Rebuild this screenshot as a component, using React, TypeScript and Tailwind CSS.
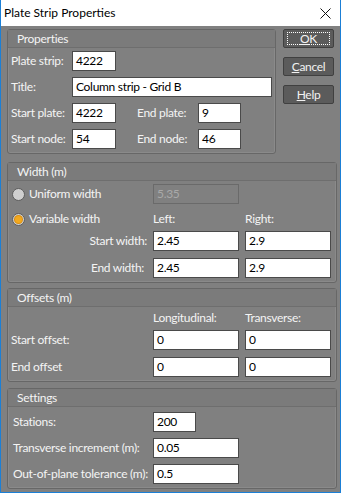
import React from "react";

const font = { fontFamily: 'Lato, "Liberation Sans", sans-serif' };

function Group({ title, className, children }: { title: string; className?: string; children: React.ReactNode }) {
  return (
    <div className={`rounded-[3px] border border-[#676767] shadow-[inset_0_0_0_1px_#8a8a8a] ${className ?? ""}`}>
      <div className="h-[18px] border-b border-[#6e6e6e] bg-[#7b7b7b] pl-[9px] text-[12px] leading-[18px] text-[#f4f4f4]">
        {title}
      </div>
      {children}
    </div>
  );
}

function Box({ value, w, disabled }: { value: string; w: string; disabled?: boolean }) {
  return (
    <div
      className={`h-[20px] shrink-0 ${w} border pl-[3px] text-[12px] leading-[18px] ${
        disabled ? "border-[#6a6a6a] bg-[#808080] text-[#a9a9a9]" : "border-[#4a4a4a] bg-white text-black"
      }`}
    >
      {value}
    </div>
  );
}

function Radio({ checked }: { checked?: boolean }) {
  return (
    <div className="flex h-[13px] w-[13px] shrink-0 items-center justify-center rounded-full border border-[#5c5c5c] bg-[#cfcfcf]">
      {checked && <div className="h-[7px] w-[7px] rounded-full bg-[#f2a91e] shadow-[0_0_0_1px_#d98d10]" />}
    </div>
  );
}

function Btn({ children, focus }: { children: React.ReactNode; focus?: boolean }) {
  return (
    <div className="flex h-[19px] w-[51px] items-center justify-center rounded-[2px] border border-[#404040] bg-[#5b5b5b] text-[12px] text-[#f2f2f2]">
      <div className={`flex h-[13px] w-[43px] items-center justify-center ${focus ? "border border-dotted border-white" : ""}`}>
        {children}
      </div>
    </div>
  );
}

const lbl = "shrink-0 whitespace-nowrap text-[12px] text-[#f4f4f4] leading-[20px]";

export default function App() {
  return (
    <div
      className="flex h-[493px] w-[341px] flex-col overflow-hidden border-x border-b border-[#1b7fd6] bg-white tracking-[-0.3px]"
      style={font}
    >
      {/* Title bar */}
      <div className="flex h-[26px] shrink-0 items-center justify-between pl-[3px] pr-[9px]">
        <span className="text-[12px] tracking-normal text-black">Plate Strip Properties</span>
        <svg width="11" height="11" viewBox="0 0 11 11">
          <path d="M0.5 0.5 L10.5 10.5 M10.5 0.5 L0.5 10.5" stroke="#111" strokeWidth="1" />
        </svg>
      </div>

      <div className="flex flex-1 flex-col bg-[#808080] pl-[6px] pr-[4px] pt-[3px]">
        {/* Top row */}
        <div className="flex">
          <Group title="Properties" className="h-[125px] w-[269px]">
            <div className="flex flex-col gap-[6px] pl-[3px] pt-[3px]">
              <div className="flex">
                <span className={`${lbl} w-[61px]`}>Plate strip:</span>
                <Box value="4222" w="w-[44px]" />
              </div>
              <div className="flex">
                <span className={`${lbl} w-[61px]`}>Title:</span>
                <Box value="Column strip - Grid B" w="w-[200px]" />
              </div>
              <div className="flex">
                <span className={`${lbl} w-[61px]`}>Start plate:</span>
                <Box value="4222" w="w-[44px]" />
                <span className={`${lbl} ml-[21px] w-[61px]`}>End plate:</span>
                <Box value="9" w="w-[43px]" />
              </div>
              <div className="flex">
                <span className={`${lbl} w-[61px]`}>Start node:</span>
                <Box value="54" w="w-[44px]" />
                <span className={`${lbl} ml-[21px] w-[61px]`}>End node:</span>
                <Box value="46" w="w-[43px]" />
              </div>
            </div>
          </Group>
          <div className="ml-[7px] flex flex-col gap-[9px]">
            <Btn focus>
              <span><u>O</u>K</span>
            </Btn>
            <Btn>
              <span><u>C</u>ancel</span>
            </Btn>
            <Btn>
              <span><u>H</u>elp</span>
            </Btn>
          </div>
        </div>

        {/* Width */}
        <Group title="Width (m)" className="mt-[8px] h-[121px] w-[330px]">
          <div className="flex flex-col pl-[4px] pt-[3px]">
            <div className="flex h-[20px] items-center">
              <Radio />
              <span className={`${lbl} ml-[4px] w-[124px]`}>Uniform width</span>
              <Box value="5.35" w="w-[86px]" disabled />
            </div>
            <div className="mt-[5px] flex h-[20px] items-center">
              <Radio checked />
              <span className={`${lbl} ml-[4px] w-[124px]`}>Variable width</span>
              <span className={`${lbl} w-[92px]`}>Left:</span>
              <span className={lbl}>Right:</span>
            </div>
            <div className="mt-[2px] flex">
              <span className={`${lbl} w-[141px] pr-[6px] text-right`}>Start width:</span>
              <Box value="2.45" w="w-[86px]" />
              <div className="w-[6px]" />
              <Box value="2.9" w="w-[86px]" />
            </div>
            <div className="mt-[7px] flex">
              <span className={`${lbl} w-[141px] pl-[79px]`}>End width:</span>
              <Box value="2.45" w="w-[86px]" />
              <div className="w-[6px]" />
              <Box value="2.9" w="w-[86px]" />
            </div>
          </div>
        </Group>

        {/* Offsets */}
        <Group title="Offsets (m)" className="mt-[5px] h-[94px] w-[330px]">
          <div className="flex flex-col pl-[3px]">
            <div className="mt-[1px] flex">
              <span className="w-[142px]" />
              <span className={`${lbl} w-[92px]`}>Longitudinal:</span>
              <span className={lbl}>Transverse:</span>
            </div>
            <div className="mt-[2px] flex">
              <span className={`${lbl} w-[142px]`}>Start offset:</span>
              <Box value="0" w="w-[86px]" />
              <div className="w-[6px]" />
              <Box value="0" w="w-[86px]" />
            </div>
            <div className="mt-[7px] flex">
              <span className={`${lbl} w-[142px]`}>End offset</span>
              <Box value="0" w="w-[86px]" />
              <div className="w-[6px]" />
              <Box value="0" w="w-[86px]" />
            </div>
          </div>
        </Group>

        {/* Settings */}
        <Group title="Settings" className="mt-[6px] h-[101px] w-[330px]">
          <div className="flex flex-col gap-[6px] pl-[5px] pt-[5px]">
            <div className="flex">
              <span className={`${lbl} w-[140px]`}>Stations:</span>
              <Box value="200" w="w-[43px]" />
            </div>
            <div className="flex">
              <span className={`${lbl} w-[140px]`}>Transverse increment (m):</span>
              <Box value="0.05" w="w-[86px]" />
            </div>
            <div className="flex">
              <span className={`${lbl} w-[140px]`}>Out-of-plane tolerance (m):</span>
              <Box value="0.5" w="w-[86px]" />
            </div>
          </div>
        </Group>
      </div>
    </div>
  );
}
